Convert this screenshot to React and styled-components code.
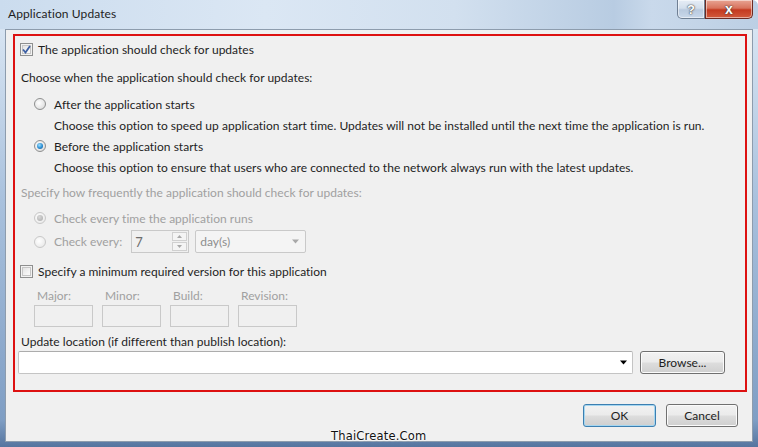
import React from "react";
import styled, { createGlobalStyle } from "styled-components";

const GlobalStyle = createGlobalStyle`
  html, body {
    margin: 0;
    padding: 0;
    background: #ffffff;
  }
  body {
    font-family: Lato, "Open Sans", sans-serif;
    font-size: 12px;
  }
`;

const Window = styled.div`
  position: relative;
  width: 758px;
  height: 447px;
  box-sizing: border-box;
  display: flex;
  flex-direction: column;
  padding: 0 5px 5px 5px;
  overflow: hidden;
  background: linear-gradient(180deg, #cfdff0 0px, #d7e4f2 30px, #a9c1dd 200px, #7f9ec4 420px, #56759f 447px);
  border-radius: 0 6px 0 0;
`;

const TitleBar = styled.div`
  height: 29px;
  display: flex;
  align-items: flex-start;
  justify-content: space-between;
  margin: 0 -5px;
  padding: 0 5px 0 8px;
  background: linear-gradient(90deg, #cbdcee 0%, #dbe7f4 35%, #d2e0ef 60%, #b8cce2 81%, #c9d9eb 86%, #bccfe4 100%);
`;

const Title = styled.div`
  margin-top: 6px;
  font-size: 12px;
  color: #1e1e1e;
  letter-spacing: 0.1px;
`;

const Caption = styled.div`
  display: flex;
`;

const CaptionButton = styled.div`
  width: ${(p) => p.$w}px;
  height: 19px;
  box-sizing: border-box;
  display: flex;
  align-items: center;
  justify-content: center;
  border: 1px solid ${(p) => (p.$close ? "#6d2a22" : "#6f7f93")};
  border-top: none;
  border-radius: ${(p) => (p.$close ? "0 0 5px 0" : "0 0 0 5px")};
  background: ${(p) =>
    p.$close
      ? "linear-gradient(180deg, #e8a493 0%, #d8735d 45%, #c4391f 55%, #d25a3c 100%)"
      : "linear-gradient(180deg, #e6edf6 0%, #d3dfec 45%, #b9cadf 55%, #c9d8ea 100%)"};
  box-shadow: inset 0 0 0 1px rgba(255, 255, 255, 0.5);
  font-family: "Liberation Sans", Arial, sans-serif;
  font-weight: bold;
  font-size: ${(p) => (p.$close ? "14px" : "13px")};
  color: #ffffff;
  text-shadow: 0 0 2px #3a3a3a, 0 0 1px #3a3a3a;
`;

const Client = styled.div`
  flex: 1;
  display: flex;
  flex-direction: column;
  border: 1px solid #8d9cad;
  background: #f0f0f0;
  padding: 4px 5px 0 7px;
`;

const Group = styled.div`
  height: 358px;
  box-sizing: border-box;
  border: 2px solid #dd1111;
  padding: 4px 0 0 0;
  display: flex;
  flex-direction: column;
`;

const Row = styled.div`
  display: flex;
  align-items: center;
  height: ${(p) => p.$h || 18}px;
  margin-top: ${(p) => p.$top || 0}px;
  padding-left: ${(p) => p.$left || 0}px;
  gap: ${(p) => p.$gap || 0}px;
`;

const Text = styled.span`
  color: ${(p) => (p.$disabled ? "#a0a0a0" : "#1e1e1e")};
  white-space: nowrap;
  letter-spacing: 0.02px;
`;

const CheckBox = styled.span`
  width: 13px;
  height: 13px;
  box-sizing: border-box;
  border: 1px solid #8e8f8f;
  background: linear-gradient(135deg, #dcdcdc 0%, #f4f4f4 60%, #ffffff 100%);
  box-shadow: inset 0 0 0 1px #f2f2f2, inset 0 0 0 2px #c6c6c6;
  display: inline-flex;
  align-items: center;
  justify-content: center;
  flex-shrink: 0;
`;

const Radio = styled.span`
  width: 12px;
  height: 12px;
  box-sizing: border-box;
  border-radius: 50%;
  border: 1px solid ${(p) => (p.$disabled ? "#c8c8c8" : "#8e8f8f")};
  background: ${(p) =>
    p.$disabled
      ? "radial-gradient(circle at 40% 40%, #ffffff 0%, #ececec 70%, #e0e0e0 100%)"
      : "radial-gradient(circle at 40% 40%, #ffffff 0%, #e6e6e6 60%, #cfcfcf 100%)"};
  display: inline-flex;
  align-items: center;
  justify-content: center;
  flex-shrink: 0;
`;

const Dot = styled.span`
  width: 6px;
  height: 6px;
  border-radius: 50%;
  background: ${(p) =>
    p.$disabled
      ? "radial-gradient(circle at 40% 35%, #d8d8d8 0%, #a8a8a8 100%)"
      : "radial-gradient(circle at 40% 35%, #9fe0ff 0%, #2b8ed3 55%, #0d4f8c 100%)"};
`;

const Spin = styled.div`
  width: 58px;
  height: 23px;
  box-sizing: border-box;
  border: 1px solid #c9c9c9;
  background: #f0f0f0;
  display: flex;
  align-items: center;
  justify-content: space-between;
  padding: 0 1px 0 3px;
  margin-left: 9px;
  color: #6d6d6d;
  font-size: 13px;
`;

const SpinArrows = styled.div`
  width: 15px;
  height: 19px;
  display: flex;
  flex-direction: column;
  gap: 1px;
`;

const SpinHalf = styled.div`
  flex: 1;
  border: 1px solid #d0d0d0;
  background: #f4f4f4;
  display: flex;
  align-items: center;
  justify-content: center;
`;

const Select = styled.div`
  width: 111px;
  height: 23px;
  box-sizing: border-box;
  border: 1px solid #c9c9c9;
  border-radius: 2px;
  background: #f4f4f4;
  display: flex;
  align-items: center;
  justify-content: space-between;
  padding: 0 6px 0 4px;
  margin-left: 6px;
  color: #8d8d8d;
`;

const VersionGrid = styled.div`
  display: grid;
  grid-template-columns: repeat(4, 59px);
  column-gap: 9px;
  row-gap: 1px;
  margin-top: 8px;
  padding-left: 19px;
`;

const VersionLabel = styled.span`
  color: #a0a0a0;
  padding-left: 3px;
  height: 16px;
  line-height: 16px;
`;

const VersionBox = styled.div`
  height: 22px;
  box-sizing: border-box;
  border: 1px solid #c9c9c9;
  background: #f0f0f0;
`;

const Combo = styled.div`
  width: 615px;
  height: 23px;
  box-sizing: border-box;
  border: 1px solid #c4c4c4;
  border-top-color: #acacac;
  border-radius: 2px;
  background: #ffffff;
  display: flex;
  align-items: center;
  justify-content: flex-end;
  padding-right: 5px;
`;

const Button = styled.button`
  width: ${(p) => p.$w}px;
  height: 23px;
  box-sizing: border-box;
  padding: 0;
  font-family: Lato, "Open Sans", sans-serif;
  font-size: 12px;
  color: #1e1e1e;
  border: 1px solid ${(p) => (p.$default ? "#3c7fb1" : "#707070")};
  border-radius: 3px;
  background: linear-gradient(180deg, #f2f2f2 0%, #ebebeb 48%, #dddddd 52%, #cfcfcf 100%);
  box-shadow: inset 0 0 0 1px ${(p) => (p.$default ? "#a5d6f0" : "#fbfbfb")};
`;

const ButtonBar = styled.div`
  display: flex;
  justify-content: flex-end;
  gap: 10px;
  margin-top: 12px;
  padding-right: 9px;
`;

const Watermark = styled.div`
  position: absolute;
  left: 331px;
  top: 429px;
  font-family: "DejaVu Sans", Tahoma, sans-serif;
  font-size: 11.5px;
  color: #111111;
  text-shadow: 0 0 2px #ffffff, 0 0 2px #ffffff;
  letter-spacing: 0.2px;
`;

const Check = () => (
  <svg width="9" height="9" viewBox="0 0 9 9">
    <path d="M1 4.5 L3.5 7.5 L8 1" fill="none" stroke="#3c5fa3" strokeWidth="1.8" />
  </svg>
);

const Arrow = ({ color = "#000", size = 7 }) => (
  <svg width={size} height={Math.ceil(size / 2) + 1} viewBox="0 0 7 4">
    <path d="M0 0 H7 L3.5 4 Z" fill={color} />
  </svg>
);

const SmallArrow = ({ up }) => (
  <svg width="5" height="3" viewBox="0 0 5 3">
    <path d={up ? "M0 3 H5 L2.5 0 Z" : "M0 0 H5 L2.5 3 Z"} fill="#a8a8a8" />
  </svg>
);

export default function App() {
  return (
    <>
      <GlobalStyle />
      <Window>
        <TitleBar>
          <Title>Application Updates</Title>
          <Caption>
            <CaptionButton $w={28}>?</CaptionButton>
            <CaptionButton $w={48} $close>
              x
            </CaptionButton>
          </Caption>
        </TitleBar>
        <Client>
          <Group>
            <Row $left={5} $gap={5}>
              <CheckBox>
                <Check />
              </CheckBox>
              <Text>The application should check for updates</Text>
            </Row>
            <Row $top={9} $left={6} $h={20}>
              <Text>Choose when the application should check for updates:</Text>
            </Row>
            <Row $top={8} $left={19} $gap={8}>
              <Radio />
              <Text>After the application starts</Text>
            </Row>
            <Row $top={3} $left={39}>
              <Text>
                Choose this option to speed up application start time. Updates will not be installed until the next
                time the application is run.
              </Text>
            </Row>
            <Row $top={3} $left={19} $gap={8}>
              <Radio>
                <Dot />
              </Radio>
              <Text>Before the application starts</Text>
            </Row>
            <Row $top={3} $left={39}>
              <Text>
                Choose this option to ensure that users who are connected to the network always run with the latest
                updates.
              </Text>
            </Row>
            <Row $top={7} $left={6}>
              <Text $disabled>Specify how frequently the application should check for updates:</Text>
            </Row>
            <Row $top={8} $left={19} $gap={8}>
              <Radio $disabled>
                <Dot $disabled />
              </Radio>
              <Text $disabled>Check every time the application runs</Text>
            </Row>
            <Row $top={3} $left={19} $h={23}>
              <Radio $disabled />
              <Text $disabled style={{ marginLeft: 8 }}>
                Check every:
              </Text>
              <Spin>
                <span>7</span>
                <SpinArrows>
                  <SpinHalf>
                    <SmallArrow up />
                  </SpinHalf>
                  <SpinHalf>
                    <SmallArrow />
                  </SpinHalf>
                </SpinArrows>
              </Spin>
              <Select>
                <span>day(s)</span>
                <Arrow color="#a8a8a8" />
              </Select>
            </Row>
            <Row $top={9} $left={5} $gap={5}>
              <CheckBox />
              <Text>Specify a minimum required version for this application</Text>
            </Row>
            <VersionGrid>
              <VersionLabel>Major:</VersionLabel>
              <VersionLabel>Minor:</VersionLabel>
              <VersionLabel>Build:</VersionLabel>
              <VersionLabel>Revision:</VersionLabel>
              <VersionBox />
              <VersionBox />
              <VersionBox />
              <VersionBox />
            </VersionGrid>
            <Row $top={6} $left={6} $h={16}>
              <Text>Update location (if different than publish location):</Text>
            </Row>
            <Row $top={2} $left={3} $h={23} $gap={7}>
              <Combo>
                <Arrow />
              </Combo>
              <Button $w={85}>Browse...</Button>
            </Row>
          </Group>
          <ButtonBar>
            <Button $w={73} $default>
              OK
            </Button>
            <Button $w={72}>Cancel</Button>
          </ButtonBar>
        </Client>
        <Watermark>ThaiCreate.Com</Watermark>
      </Window>
    </>
  );
}
